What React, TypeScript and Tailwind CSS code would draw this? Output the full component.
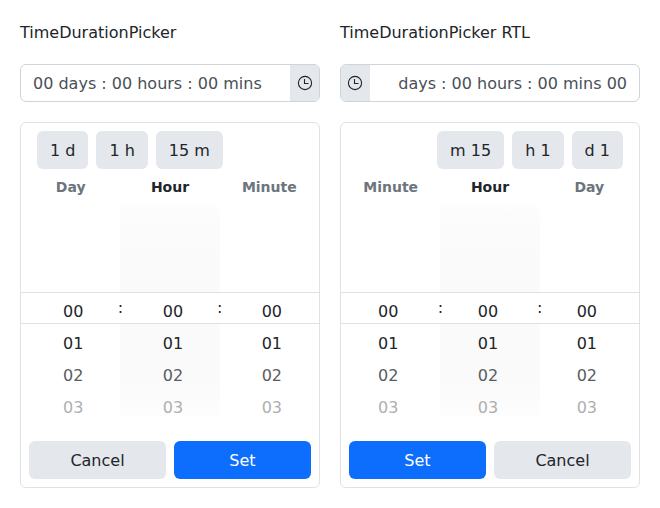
const units = ["Day", "Hour", "Minute"];

const rows = [
  { value: "00", color: "text-[#212529]" },
  { value: "01", color: "text-[#212529]" },
  { value: "02", color: "text-[#5a5c5f]" },
  { value: "03", color: "text-[#aeafb0]" },
];

function Clock() {
  return (
    <svg width="16" height="16" viewBox="0 0 16 16" fill="none" stroke="#212529" aria-hidden="true">
      <circle cx="8" cy="8" r="6.6" strokeWidth="1.1" />
      <path d="M7.500 4V8.500H11.500" strokeWidth="1.1" />
    </svg>
  );
}

function Picker({ title, rtl = false }: { title: string; rtl?: boolean }) {
  return (
    <section className="w-[300px]">
      <h2 className="h-6 pt-px text-base leading-6">{title}</h2>
      <div dir={rtl ? "rtl" : "ltr"}>
        <div className="mt-5 flex h-[38px] overflow-hidden rounded-md border border-[#ced4da]">
          <div className="flex-1 px-3 pt-px leading-9 text-[#495057]">00 days : 00 hours : 00 mins</div>
          <button className="flex w-[29px] items-center justify-center bg-[#e4e7eb] ps-px">
            <Clock />
          </button>
        </div>
        <div className="mt-5 h-[366px] rounded-md border border-[#dee2e6]">
          <div className="flex gap-2 px-4 pt-2">
            {["1 d", "1 h", "15 m"].map((t) => (
              <button key={t} className="h-[38px] rounded-md bg-[#e4e7eb] px-[13px] pt-0.5">
                {t}
              </button>
            ))}
          </div>
          <div className="grid h-[34px] grid-cols-3 pt-2 text-center text-sm font-bold leading-5">
            {units.map((u) => (
              <div key={u} className={u === "Hour" ? "" : "text-[#6c757d]"}>
                {u}
              </div>
            ))}
          </div>
          <div className="relative h-[217px]">
            <div className="grid h-full grid-cols-3">
              {units.map((u) => (
                <div
                  key={u}
                  className={
                    "pt-[93px] text-center leading-8 " +
                    (u === "Hour"
                      ? "bg-[linear-gradient(to_bottom,#fff_0px,#fcfcfc_8px,#fafafa_55px,#fafafa_175px,#fcfcfc_200px,#fdfdfd_213px,#fff_215px)] " +
                        (rtl ? "ps-[4px]" : "ps-[6px]")
                      : "ps-[5px]")
                  }
                >
                  {rows.map((row) => (
                    <div key={row.value} className={"relative z-20 h-8 " + row.color}>
                      {row.value}
                    </div>
                  ))}
                </div>
              ))}
            </div>
            <div className="absolute inset-x-0 top-[89px] z-10 h-8 border-y border-[#dee2e6] bg-white">
              <span className="absolute left-1/3 top-0 -translate-x-1/2 leading-[30px]">:</span>
              <span className="absolute left-2/3 top-0 -translate-x-1/2 leading-[30px]">:</span>
            </div>
          </div>
          <div className="flex gap-2 px-2 pt-[21px]">
            <button className="h-[38px] flex-1 rounded-md bg-[#e4e7eb] pt-0.5">Cancel</button>
            <button className="h-[38px] flex-1 rounded-md bg-[#0d6efd] pt-0.5 text-white">Set</button>
          </div>
        </div>
      </div>
    </section>
  );
}

export default function App() {
  return (
    <main className="flex h-[508px] gap-5 bg-white p-5 font-['DejaVu_Sans',sans-serif] text-base text-[#212529]">
      <Picker title="TimeDurationPicker" />
      <Picker title="TimeDurationPicker RTL" rtl />
    </main>
  );
}
